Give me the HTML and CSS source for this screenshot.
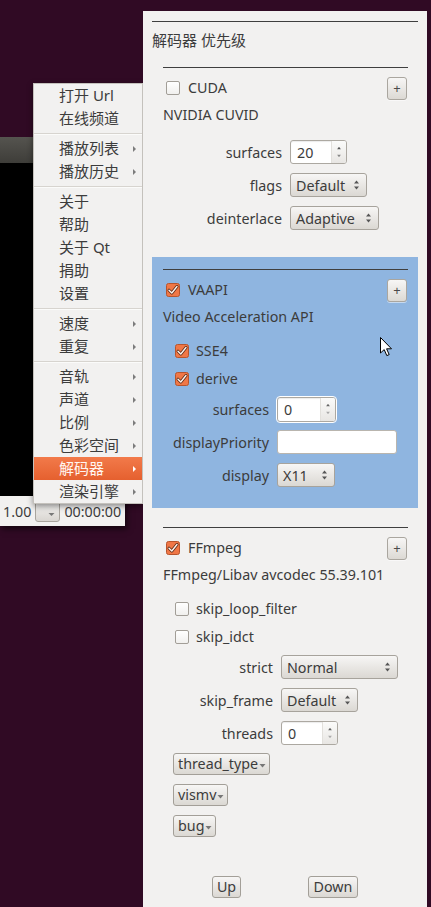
FILE: index.html
```html
<!DOCTYPE html>
<html>
<head>
<meta charset="utf-8">
<title>解码器</title>
<link rel="stylesheet" href="styles.css">
</head>
<body>
<div class="desktop">
  <div class="player">
    <div class="titlebar"></div>
    <div class="video"></div>
    <div class="controls">
      <span class="speed">1.00</span>
      <span class="ctl-combo"><svg width="7" height="5" viewBox="0 0 7 5"><polygon points="0.5,1 6.5,1 3.5,4" fill="#777"/></svg></span>
      <span class="time">00:00:00</span>
    </div>
  </div>

  <div class="menu">
    <div class="mi"><span>打开 Url</span></div>
    <div class="mi"><span>在线频道</span></div>
    <div class="sep"></div>
    <div class="mi sub"><span>播放列表</span><i class="arr"></i></div>
    <div class="mi sub"><span>播放历史</span><i class="arr"></i></div>
    <div class="sep"></div>
    <div class="mi"><span>关于</span></div>
    <div class="mi"><span>帮助</span></div>
    <div class="mi"><span>关于 Qt</span></div>
    <div class="mi"><span>捐助</span></div>
    <div class="mi"><span>设置</span></div>
    <div class="sep"></div>
    <div class="mi sub"><span>速度</span><i class="arr"></i></div>
    <div class="mi sub"><span>重复</span><i class="arr"></i></div>
    <div class="sep"></div>
    <div class="mi sub"><span>音轨</span><i class="arr"></i></div>
    <div class="mi sub"><span>声道</span><i class="arr"></i></div>
    <div class="mi sub"><span>比例</span><i class="arr"></i></div>
    <div class="mi sub"><span>色彩空间</span><i class="arr"></i></div>
    <div class="mi sub active"><span>解码器</span><i class="arr"></i></div>
    <div class="mi sub"><span>渲染引擎</span><i class="arr"></i></div>
  </div>

  <div class="panel">
    <div class="rule"></div>
    <div class="title">解码器 优先级</div>

    <section class="decoder">
      <div class="dec-rule"></div>
      <div class="dec-head">
        <span class="check"><span class="box"></span><span>CUDA</span></span>
        <span class="plus">+</span>
      </div>
      <div class="desc">NVIDIA CUVID</div>
      <div class="form form-cuda">
        <span class="lbl">surfaces</span>
        <span class="spin w57"><span class="val">20</span><span class="spin-btn"><svg width="15" height="22" viewBox="0 0 15 22"><polygon points="5.5,8 7.5,5.5 9.5,8" fill="#555"/><polygon points="5.5,14 7.5,16.5 9.5,14" fill="#888"/></svg></span></span>
        <span class="lbl">flags</span>
        <span class="combo w77"><span class="val">Default</span><svg class="ud" width="7" height="12" viewBox="0 0 7 12"><polygon points="1,4.5 3.5,1.5 6,4.5" fill="#555"/><polygon points="1,7.5 3.5,10.5 6,7.5" fill="#555"/></svg></span>
        <span class="lbl">deinterlace</span>
        <span class="combo w88"><span class="val">Adaptive</span><svg class="ud" width="7" height="12" viewBox="0 0 7 12"><polygon points="1,4.5 3.5,1.5 6,4.5" fill="#555"/><polygon points="1,7.5 3.5,10.5 6,7.5" fill="#555"/></svg></span>
      </div>
    </section>

    <section class="decoder selected">
      <div class="dec-rule"></div>
      <div class="dec-head">
        <span class="check"><svg class="cb" width="14" height="14" viewBox="0 0 14 14"><rect x="0.5" y="0.5" width="13" height="13" rx="2" fill="#f07746" stroke="#b8542c"/><path d="M3 7.2 L5.8 10 L11 3.5" fill="none" stroke="#5b2b17" stroke-width="3" stroke-linecap="round" stroke-linejoin="round"/><path d="M3 7.2 L5.8 10 L11 3.5" fill="none" stroke="#fff3ec" stroke-width="1.4" stroke-linecap="round" stroke-linejoin="round"/></svg><span>VAAPI</span></span>
        <span class="plus">+</span>
      </div>
      <div class="desc">Video Acceleration API</div>
      <div class="opts">
        <span class="check"><svg class="cb" width="14" height="14" viewBox="0 0 14 14"><rect x="0.5" y="0.5" width="13" height="13" rx="2" fill="#f07746" stroke="#b8542c"/><path d="M3 7.2 L5.8 10 L11 3.5" fill="none" stroke="#5b2b17" stroke-width="3" stroke-linecap="round" stroke-linejoin="round"/><path d="M3 7.2 L5.8 10 L11 3.5" fill="none" stroke="#fff3ec" stroke-width="1.4" stroke-linecap="round" stroke-linejoin="round"/></svg><span>SSE4</span></span>
        <span class="check"><svg class="cb" width="14" height="14" viewBox="0 0 14 14"><rect x="0.5" y="0.5" width="13" height="13" rx="2" fill="#f07746" stroke="#b8542c"/><path d="M3 7.2 L5.8 10 L11 3.5" fill="none" stroke="#5b2b17" stroke-width="3" stroke-linecap="round" stroke-linejoin="round"/><path d="M3 7.2 L5.8 10 L11 3.5" fill="none" stroke="#fff3ec" stroke-width="1.4" stroke-linecap="round" stroke-linejoin="round"/></svg><span>derive</span></span>
      </div>
      <div class="form form-vaapi">
        <span class="lbl">surfaces</span>
        <span class="spin w59 focus"><span class="val">0</span><span class="spin-btn"><svg width="15" height="22" viewBox="0 0 15 22"><polygon points="5.5,8 7.5,5.5 9.5,8" fill="#666"/><polygon points="5.5,14 7.5,16.5 9.5,14" fill="#aaa"/></svg></span></span>
        <span class="lbl">displayPriority</span>
        <span class="edit w120"></span>
        <span class="lbl">display</span>
        <span class="combo w58"><span class="val">X11</span><svg class="ud" width="7" height="12" viewBox="0 0 7 12"><polygon points="1,4.5 3.5,1.5 6,4.5" fill="#555"/><polygon points="1,7.5 3.5,10.5 6,7.5" fill="#555"/></svg></span>
      </div>
    </section>

    <section class="decoder last">
      <div class="dec-rule"></div>
      <div class="dec-head">
        <span class="check"><svg class="cb" width="14" height="14" viewBox="0 0 14 14"><rect x="0.5" y="0.5" width="13" height="13" rx="2" fill="#f07746" stroke="#b8542c"/><path d="M3 7.2 L5.8 10 L11 3.5" fill="none" stroke="#5b2b17" stroke-width="3" stroke-linecap="round" stroke-linejoin="round"/><path d="M3 7.2 L5.8 10 L11 3.5" fill="none" stroke="#fff3ec" stroke-width="1.4" stroke-linecap="round" stroke-linejoin="round"/></svg><span>FFmpeg</span></span>
        <span class="plus">+</span>
      </div>
      <div class="desc">FFmpeg/Libav avcodec 55.39.101</div>
      <div class="opts">
        <span class="check"><span class="box"></span><span>skip_loop_filter</span></span>
        <span class="check"><span class="box"></span><span>skip_idct</span></span>
      </div>
      <div class="form form-ff">
        <span class="lbl">strict</span>
        <span class="combo w117"><span class="val">Normal</span><svg class="ud" width="7" height="12" viewBox="0 0 7 12"><polygon points="1,4.5 3.5,1.5 6,4.5" fill="#555"/><polygon points="1,7.5 3.5,10.5 6,7.5" fill="#555"/></svg></span>
        <span class="lbl">skip_frame</span>
        <span class="combo w77"><span class="val">Default</span><svg class="ud" width="7" height="12" viewBox="0 0 7 12"><polygon points="1,4.5 3.5,1.5 6,4.5" fill="#555"/><polygon points="1,7.5 3.5,10.5 6,7.5" fill="#555"/></svg></span>
        <span class="lbl">threads</span>
        <span class="spin w57"><span class="val">0</span><span class="spin-btn"><svg width="15" height="22" viewBox="0 0 15 22"><polygon points="5.5,8 7.5,5.5 9.5,8" fill="#666"/><polygon points="5.5,14 7.5,16.5 9.5,14" fill="#aaa"/></svg></span></span>
      </div>
      <div class="flags">
        <span class="btn drop">thread_type<svg width="7" height="5" viewBox="0 0 7 5"><polygon points="0.5,1 6.5,1 3.5,4.5" fill="#777"/></svg></span>
        <span class="btn drop">vismv<svg width="7" height="5" viewBox="0 0 7 5"><polygon points="0.5,1 6.5,1 3.5,4.5" fill="#777"/></svg></span>
        <span class="btn drop">bug<svg width="7" height="5" viewBox="0 0 7 5"><polygon points="0.5,1 6.5,1 3.5,4.5" fill="#777"/></svg></span>
      </div>
    </section>

    <div class="updown">
      <span class="btn up">Up</span>
      <span class="btn down">Down</span>
    </div>
  </div>

  <svg class="cursor" width="13" height="20" viewBox="0 0 13 20"><path d="M0.5 0.5 L0.5 16 L4.2 12.6 L6.8 18.6 L9.2 17.6 L6.6 11.8 L11.5 11.8 Z" fill="#fff" stroke="#000" stroke-width="1" stroke-linejoin="round"/></svg>
</div>
</body>
</html>
```

FILE: styles.css
```css
* { box-sizing: border-box; }

body {
  margin: 0;
  background: #300a24;
  font-family: "Noto Sans", "Noto Sans CJK SC", sans-serif;
  color: #3c3c3c;
}

.desktop {
  position: relative;
  width: 431px;
  height: 907px;
  overflow: hidden;
  background: #300a24;
}

/* ---------- player window (behind the menu) ---------- */
.player {
  position: absolute;
  left: 0;
  top: 137px;
  width: 125px;
  display: flex;
  flex-direction: column;
}
.titlebar {
  height: 26px;
  background: linear-gradient(#55544f, #3e3d39);
}
.video {
  height: 333px;
  background: #000;
}
.controls {
  height: 30px;
  background: #f2f1f0;
  display: flex;
  align-items: center;
  gap: 4px;
  padding-left: 3px;
  font-size: 14.3px;
  color: #3c3c3c;
  box-shadow: 2px 3px 6px rgba(0, 0, 0, 0.6);
}
.ctl-combo {
  width: 25px;
  height: 21px;
  border: 1px solid #a9a59e;
  border-radius: 3px;
  background: linear-gradient(#f4f3f2, #d9d6d1);
  display: flex;
  align-items: flex-end;
  justify-content: flex-end;
  padding: 0 4px 4px 0;
}

/* ---------- popup menu ---------- */
.menu {
  position: absolute;
  left: 33px;
  top: 83px;
  width: 110px;
  background: #f2f1f0;
  border: 1px solid #c4c1bc;
  box-shadow: 0 2px 6px rgba(0, 0, 0, 0.45);
  font-size: 15px;
  color: #3c3c3c;
}
.mi {
  height: 23px;
  line-height: 23px;
  padding-left: 25px;
  padding-right: 6px;
  display: flex;
  align-items: center;
  justify-content: space-between;
  white-space: nowrap;
}
.arr {
  width: 0;
  height: 0;
  border-top: 3px solid transparent;
  border-bottom: 3px solid transparent;
  border-left: 3px solid #7c7c7c;
}
.mi.active {
  background: linear-gradient(#f27a4a, #e5602f);
  color: #fff6f1;
}
.mi.active .arr { border-left-color: #fff; }
.sep {
  height: 7px;
  display: flex;
  align-items: center;
}
.sep::before {
  content: "";
  flex: 1;
  height: 1px;
  background: #d7d4cf;
  box-shadow: 0 1px 0 #fbfbfa;
}

/* ---------- decoder panel ---------- */
.panel {
  position: absolute;
  left: 143px;
  top: 11px;
  width: 284px;
  bottom: 0;
  background: #f2f1f0;
  padding: 10px 9px 0 9px;
  font-size: 14.3px;
}
.rule {
  height: 1px;
  background: #3f3f3f;
}
.title {
  height: 33px;
  padding-top: 7px;
  line-height: 22px;
  font-size: 15px;
}

.decoder {
  padding: 12px 10px 20px 11px;
  margin-bottom: 7px;
}
.decoder.selected {
  background: #8fb5e0;
  padding-bottom: 21px;
}
.decoder.last { padding-bottom: 0; }
.dec-rule {
  height: 1px;
  background: #3f3f3f;
}
.dec-head {
  margin-top: 9px;
  height: 22px;
  display: flex;
  align-items: center;
  justify-content: space-between;
  padding-left: 3px;
  padding-right: 1px;
}
.check {
  display: flex;
  align-items: center;
  gap: 8px;
  height: 20px;
  line-height: 20px;
  white-space: nowrap;
}
.box {
  width: 14px;
  height: 14px;
  flex: none;
  border: 1px solid #a29e97;
  border-radius: 2px;
  background: linear-gradient(#ffffff, #f1f0ee);
}
.cb { flex: none; display: block; }
.plus {
  width: 20px;
  height: 23px;
  border: 1px solid #aaa69f;
  border-radius: 3px;
  background: linear-gradient(#f7f6f5, #dcd9d4);
  box-shadow: 0 1px 0 rgba(255, 255, 255, 0.5);
  display: flex;
  align-items: center;
  justify-content: center;
  font-size: 13px;
  color: #4a4a4a;
}
.desc {
  margin-top: 6px;
  height: 20px;
  line-height: 20px;
  white-space: nowrap;
}
.opts {
  margin-top: 14px;
  padding-left: 12px;
  display: flex;
  flex-direction: column;
  gap: 8px;
}
.opts .check { gap: 7px; }

.form {
  display: grid;
  grid-auto-rows: 24px;
  row-gap: 9px;
  column-gap: 8px;
  align-items: center;
  justify-items: start;
}
.form-cuda { grid-template-columns: 119px auto; margin-top: 15px; }
.form-vaapi { grid-template-columns: 106px auto; margin-top: 8px; }
.form-ff { grid-template-columns: 110px auto; margin-top: 8px; }
.lbl {
  justify-self: end;
  white-space: nowrap;
}

.spin, .combo, .edit {
  height: 24px;
  border-radius: 3px;
  display: flex;
  align-items: center;
}
.spin {
  background: #fff;
  border: 1px solid #aca8a1;
  box-shadow: inset 0 1px 1px rgba(0, 0, 0, 0.08);
  justify-content: space-between;
  overflow: hidden;
}
.spin.focus { outline: 1px solid #ffffff; height: 25px; }
.spin .val { padding-left: 6px; }
.spin-btn {
  width: 15px;
  height: 100%;
  background: linear-gradient(#fbfbfa, #e8e6e3);
  border-left: 1px solid #e2e0dc;
  display: flex;
  align-items: center;
}
.combo {
  border: 1px solid #a7a39c;
  background: linear-gradient(#f7f6f5, #dbd8d3);
  justify-content: space-between;
  padding-left: 5px;
  padding-right: 6px;
  white-space: nowrap;
}
.edit {
  background: #fff;
  border: 1px solid #b9b5ae;
  height: 24px;
}

.w57 { width: 57px; }
.w58 { width: 58px; }
.w59 { width: 59px; }
.w77 { width: 77px; }
.w88 { width: 89px; }
.w117 { width: 117px; }
.w120 { width: 120px; }

.btn {
  height: 22px;
  border: 1px solid #a39f98;
  border-radius: 3px;
  background: linear-gradient(#f7f6f5, #dbd8d3);
  display: inline-flex;
  align-items: center;
  padding: 0 4px;
  line-height: 20px;
  white-space: nowrap;
}
.btn.drop { gap: 1px; padding-right: 3px; }
.btn.drop svg { margin-top: 3px; }
.flags {
  margin-top: 8px;
  display: flex;
  flex-direction: column;
  align-items: flex-start;
  gap: 9px;
  padding-left: 10px;
}
.updown {
  margin-top: 39px;
  display: flex;
  padding-left: 60px;
}
.btn.up { width: 29px; justify-content: center; }
.btn.down { width: 50px; justify-content: center; margin-left: 67px; }

.cursor {
  position: absolute;
  left: 380px;
  top: 337px;
}
```
